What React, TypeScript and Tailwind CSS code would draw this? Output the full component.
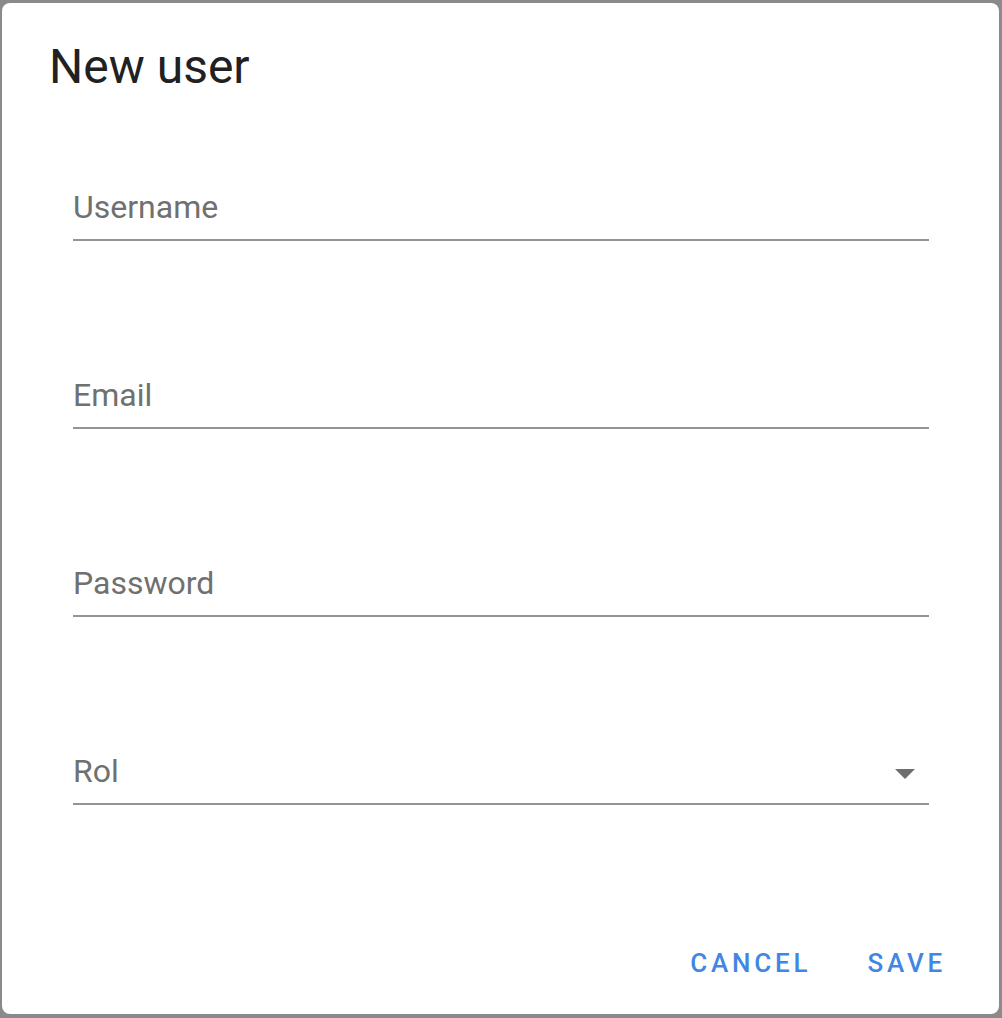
import React from "react";

const Field = ({ label, select }: { label: string; select?: boolean }) => (
  <div className="flex flex-col">
    <div className="relative flex h-[38px] items-center text-[32px] leading-[38px] text-[#707070]">
      <span>{label}</span>
      {select && (
        <svg
          className="absolute right-[14px] top-[17px]"
          width="20"
          height="10"
          viewBox="0 0 20 10"
        >
          <polygon points="0,0 20,0 10,10" fill="#6e6e6e" />
        </svg>
      )}
    </div>
    <div className="mt-[13px] h-[2px] bg-[#959595]" />
  </div>
);

export default function App() {
  return (
    <div
      className="h-[1018px] w-[1002px] bg-[#8a8a8a] pb-[4px] pl-[2px] pr-[3px] pt-[3px]"
      style={{ fontFamily: "Roboto, 'Liberation Sans', sans-serif" }}
    >
      <div className="flex h-full flex-col rounded-[8px] bg-white">
        <div className="pl-[47px] pt-[36px] text-[48px] leading-[56px] text-[#212121]">
          New user
        </div>
        <div className="mt-[93px] flex flex-col gap-[135px] pl-[71px] pr-[70px]">
          <Field label="Username" />
          <Field label="Email" />
          <Field label="Password" />
          <Field label="Rol" select />
        </div>
        <div className="mt-auto flex justify-end gap-[56px] pb-[35px] pr-[53px] text-[26px] font-medium leading-[32px] tracking-[3.8px] text-[#3f87e2]">
          <span>CANCEL</span>
          <span>SAVE</span>
        </div>
      </div>
    </div>
  );
}
